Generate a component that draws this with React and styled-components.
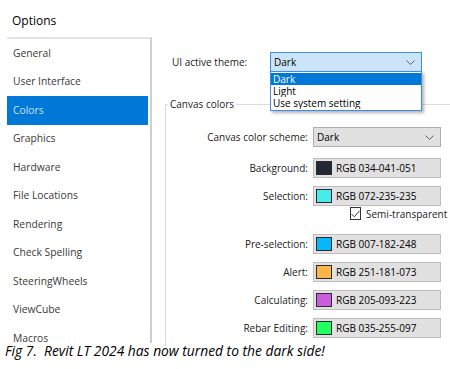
import React from "react";
import styled, { createGlobalStyle } from "styled-components";

const Global = createGlobalStyle`
  html, body { margin: 0; padding: 0; background: #ffffff; }
  body { font-family: "Open Sans", "Noto Sans", sans-serif; }
  * { box-sizing: border-box; }
`;

const Page = styled.div`
  width: 450px;
  height: 369px;
  position: relative;
  overflow: hidden;
  background: #fff;
`;

const Title = styled.div`
  height: 37px;
  padding: 13px 0 0 12px;
  font-size: 12px;
  line-height: 16px;
  color: #000;
`;

const Main = styled.div`
  display: flex;
  height: 306px;
  padding-left: 7px;
`;

const Sidebar = styled.ul`
  list-style: none;
  margin: 0;
  padding: 0;
  width: 145px;
  border-top: 2px solid #e3e3e3;
  border-right: 2px solid #cfcfcf;
  overflow: hidden;
`;

const NavItem = styled.li`
  height: 28.5px;
  display: flex;
  align-items: center;
  padding-left: 6px;
  margin-right: 2px;
  font-size: 10.3px;
  line-height: 13px;
  color: ${(p) => (p.$active ? "#cfe3f7" : "#3a3a3a")};
  background: ${(p) => (p.$active ? "#0078d7" : "transparent")};
`;

const Content = styled.div`
  flex: 1;
  position: relative;
  padding-left: 13px;
`;

const ThemeRow = styled.div`
  display: flex;
  align-items: center;
  height: 20px;
  margin-top: 15px;
  padding-left: 7px;
  font-size: 10px;
  color: #222;
`;

const ThemeLabel = styled.span`
  width: 98px;
`;

const Combo = styled.div`
  position: relative;
  display: flex;
  align-items: center;
  justify-content: space-between;
  width: ${(p) => p.$w}px;
  height: 20px;
  padding: 0 6px 0 3px;
  font-size: 10px;
  color: #000;
  background: ${(p) => (p.$focus ? "#cce4f7" : "#e1e1e1")};
  border: 1px solid ${(p) => (p.$focus ? "#3d8ee0" : "#adadad")};
`;

const Popup = styled.ul`
  position: absolute;
  left: -1px;
  top: 18px;
  width: 152px;
  margin: 0;
  padding: 1px 0 1px 0;
  list-style: none;
  background: #fff;
  border: 1px solid #3d8ee0;
  box-shadow: 2px 2px 3px rgba(0, 0, 0, 0.3);
  z-index: 2;
`;

const PopupItem = styled.li`
  height: 12px;
  line-height: 12px;
  padding-left: 2px;
  font-size: 10px;
  overflow: hidden;
  color: ${(p) => (p.$active ? "#fff" : "#000")};
  background: ${(p) => (p.$active ? "#0078d7" : "transparent")};
`;

const Group = styled.fieldset`
  margin: 25px -20px 0 0;
  padding: 16px 0 0 0;
  height: 249px;
  border: 1px solid #dcdcdc;
  border-bottom: none;
  min-width: 0;
`;

const Legend = styled.legend`
  margin-left: 2px;
  padding: 0 2px;
  font-size: 10px;
  line-height: 14px;
  color: #222;
`;

const Fields = styled.div`
  display: grid;
  grid-template-columns: 142px 128px;
  column-gap: 5px;
  align-items: center;
`;

const FieldLabel = styled.div`
  text-align: right;
  font-size: 10px;
  color: #222;
  height: 20px;
  line-height: 20px;
  margin-top: ${(p) => p.$mt || 0}px;
`;

const Cell = styled.div`
  margin-top: ${(p) => p.$mt || 0}px;
`;

const ColorField = styled.div`
  display: flex;
  align-items: center;
  height: 20px;
  padding-left: 2px;
  background: #e1e1e1;
  border: 1px solid #bdbdbd;
  font-size: 10px;
  color: #000;
  gap: 4px;
`;

const Swatch = styled.span`
  width: 16px;
  height: 14px;
  border: 1px solid #2a2a2a;
  background: ${(p) => p.$c};
`;

const CheckRow = styled.div`
  grid-column: 2;
  display: flex;
  align-items: center;
  gap: 5px;
  height: 13px;
  margin-top: 1px;
  padding-left: 37px;
  white-space: nowrap;
  font-size: 10px;
  color: #222;
`;

const Box = styled.span`
  width: 13px;
  height: 13px;
  border: 1px solid #333;
  background: #fff;
  display: flex;
  align-items: center;
  justify-content: center;
`;

const Caption = styled.div`
  padding: 0 0 0 5px;
  font-family: "Open Sans", sans-serif;
  font-style: italic;
  font-size: 13.8px;
  line-height: 15px;
  color: #000;
  white-space: nowrap;
`;

const Chevron = () => (
  <svg width="9" height="5" viewBox="0 0 9 5">
    <path d="M0.5 0.5 L4.5 4.5 L8.5 0.5" fill="none" stroke="#606060" strokeWidth="1" />
  </svg>
);

const nav = [
  "General",
  "User Interface",
  "Colors",
  "Graphics",
  "Hardware",
  "File Locations",
  "Rendering",
  "Check Spelling",
  "SteeringWheels",
  "ViewCube",
  "Macros",
];

const colors = [
  { label: "Background:", c: "#222933", t: "RGB 034-041-051", mt: 11 },
  { label: "Selection:", c: "#48ebeb", t: "RGB 072-235-235", mt: 8, check: true },
  { label: "Pre-selection:", c: "#07b6f8", t: "RGB 007-182-248", mt: 14 },
  { label: "Alert:", c: "#fbb549", t: "RGB 251-181-073", mt: 8 },
  { label: "Calculating:", c: "#cd5ddf", t: "RGB 205-093-223", mt: 8 },
  { label: "Rebar Editing:", c: "#23ff61", t: "RGB 035-255-097", mt: 8 },
];

export default function App() {
  return (
    <Page>
      <Global />
      <Title>Options</Title>
      <Main>
        <Sidebar>
          {nav.map((n) => (
            <NavItem key={n} $active={n === "Colors"}>
              {n}
            </NavItem>
          ))}
        </Sidebar>
        <Content>
          <ThemeRow>
            <ThemeLabel>UI active theme:</ThemeLabel>
            <Combo $w={152} $focus>
              <span>Dark</span>
              <Chevron />
              <Popup>
                <PopupItem $active>Dark</PopupItem>
                <PopupItem>Light</PopupItem>
                <PopupItem>Use system setting</PopupItem>
              </Popup>
            </Combo>
          </ThemeRow>
          <Group>
            <Legend>Canvas colors</Legend>
            <Fields>
              <FieldLabel>Canvas color scheme:</FieldLabel>
              <Cell>
                <Combo $w={128}>
                  <span>Dark</span>
                  <Chevron />
                </Combo>
              </Cell>
              {colors.map((r) => (
                <React.Fragment key={r.label}>
                  <FieldLabel $mt={r.mt}>{r.label}</FieldLabel>
                  <Cell $mt={r.mt}>
                    <ColorField>
                      <Swatch $c={r.c} />
                      <span>{r.t}</span>
                    </ColorField>
                  </Cell>
                  {r.check && (
                    <CheckRow>
                      <Box>
                        <svg width="9" height="8" viewBox="0 0 9 8">
                          <path d="M0.5 4 L3.3 6.8 L8.5 0.8" fill="none" stroke="#333" strokeWidth="1" />
                        </svg>
                      </Box>
                      Semi-transparent
                    </CheckRow>
                  )}
                </React.Fragment>
              ))}
            </Fields>
          </Group>
        </Content>
      </Main>
      <Caption>Fig 7.&nbsp; Revit LT 2024 has now turned to the dark side!</Caption>
    </Page>
  );
}
